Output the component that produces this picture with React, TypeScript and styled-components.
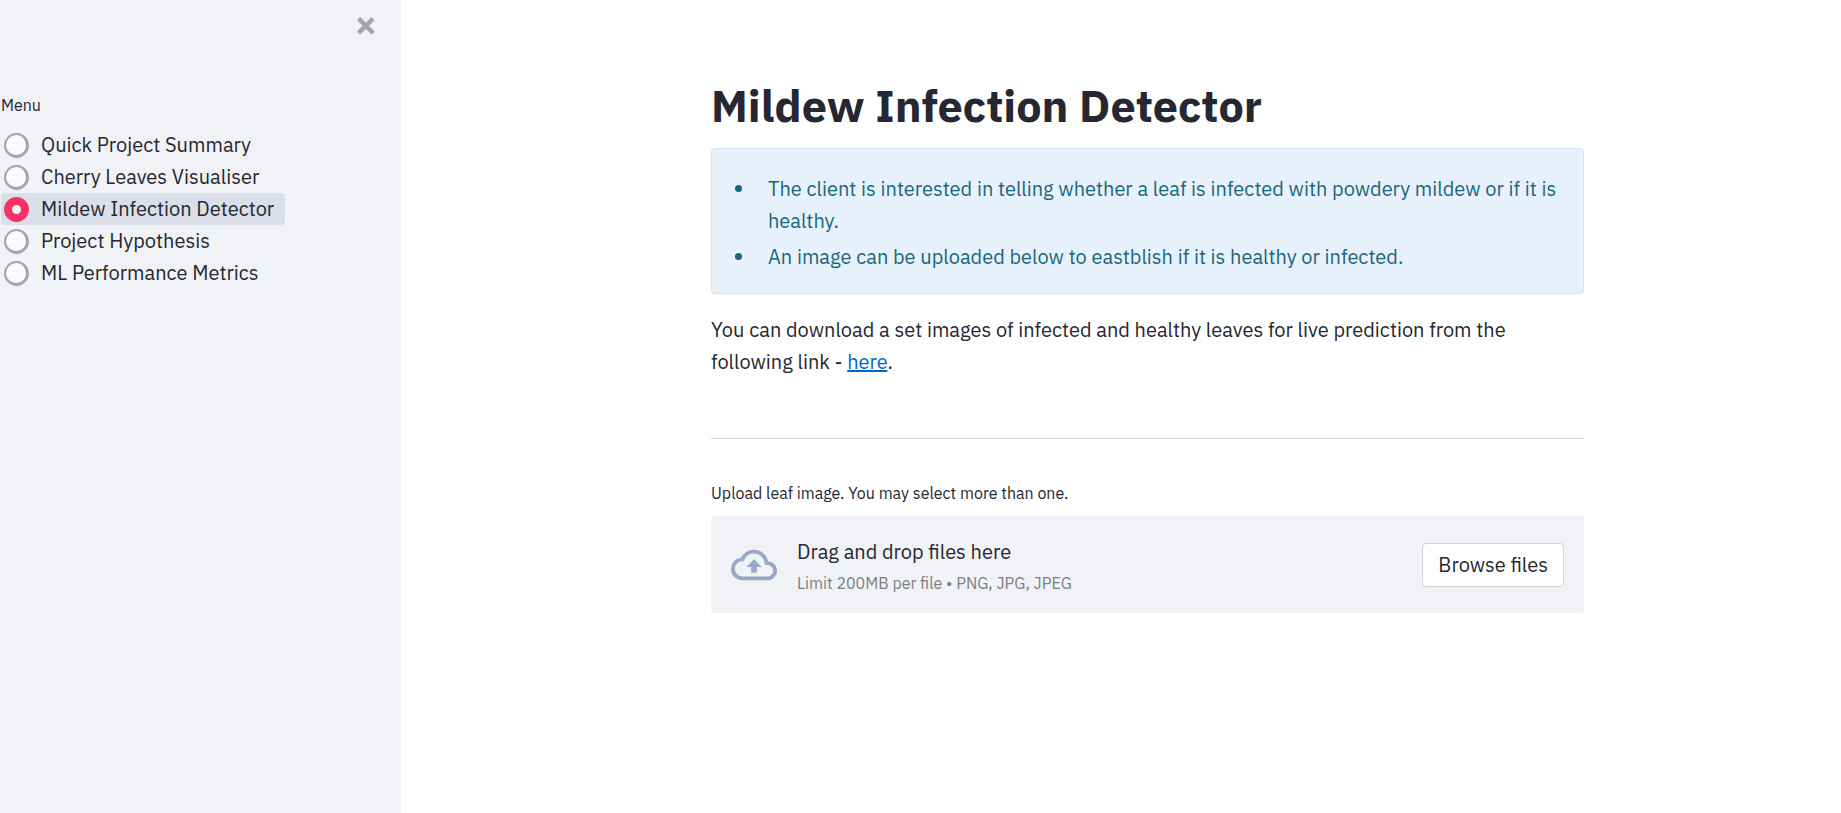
import React, { useRef, useState } from "react";
import styled, { createGlobalStyle } from "styled-components";
import { MdOutlineCloudUpload } from "react-icons/md";

const GlobalStyle = createGlobalStyle`
  *, *::before, *::after { box-sizing: border-box; }
  body {
    margin: 0;
    background: #ffffff;
    color: #262730;
    font-family: "IBM Plex Sans", "Noto Sans", sans-serif;
    font-size: 20px;
    font-weight: 400;
    line-height: 32px;
  }
`;

const Page = styled.div`
  display: flex;
  min-height: 100vh;
`;

const Sidebar = styled.aside`
  flex: 0 0 401px;
  background: #f0f2f6;
`;

const SidebarHeader = styled.div`
  display: flex;
  justify-content: flex-end;
  height: 93px;
  padding: 12px 21px;
`;

const CloseButton = styled.button`
  display: flex;
  align-items: center;
  justify-content: center;
  width: 28px;
  height: 28px;
  padding: 0;
  border: 0;
  background: none;
  color: #a3a5ab;
  cursor: pointer;
`;

const Menu = styled.fieldset`
  display: flex;
  flex-direction: column;
  align-items: flex-start;
  margin: 0;
  padding: 0 0 0 1px;
  border: 0;
`;

const MenuTitle = styled.legend`
  margin-bottom: 12px;
  padding: 0;
  font-size: 16px;
  line-height: 24px;
`;

const MenuItem = styled.label<{ $active: boolean }>`
  display: flex;
  align-items: center;
  gap: 12px;
  height: 32px;
  padding: 0 11px 0 3px;
  border-radius: 4px;
  background: ${(p) => (p.$active ? "#dadfe9" : "transparent")};
  cursor: pointer;
`;

const Radio = styled.input`
  appearance: none;
  width: 25px;
  height: 25px;
  margin: 0;
  border: solid #a3a5ab;
  border-width: 2px 3px 3px 2px;
  border-radius: 50%;
  background: #fafafc;

  &:checked {
    border: 8px solid #f63366;
    background: #f0f2f6;
  }
`;

const Main = styled.main`
  flex: 1;
  min-width: 0;
  padding: 80px 0 40px 53px;
`;

const Content = styled.div`
  max-width: 873px;
  margin: 0 auto;
`;

const Title = styled.h1`
  margin: 0 0 18px;
  font-size: 45px;
  font-weight: 700;
  line-height: 50px;
`;

const InfoBox = styled.div`
  padding: 20px 20px 16px;
  border: 1px solid #d0e4f8;
  border-radius: 4px;
  background: #e7f1fc;
  color: #1b6678;
`;

const InfoList = styled.ul`
  display: flow-root;
  margin: 0;
  padding: 0;
`;

const InfoItem = styled.li`
  margin: 4px 0 4px 24px;
  padding-left: 12px;
`;

const Paragraph = styled.p`
  margin: 20px 0 60px;
`;

const Link = styled.a`
  color: #0068c9;
`;

const Divider = styled.hr`
  height: 1px;
  margin: 0 0 42px;
  border: 0;
  background: #d4d5d9;
`;

const UploadLabel = styled.label`
  display: block;
  margin-bottom: 11px;
  font-size: 16px;
  line-height: 24px;
`;

const DropZone = styled.section`
  display: flex;
  align-items: center;
  padding: 18px 20px;
  border-radius: 4px;
  background: #f0f2f6;
`;

const CloudIcon = styled(MdOutlineCloudUpload)`
  flex: none;
  width: 46px;
  height: 46px;
  margin-right: 20px;
  color: #98a7c5;
`;

const DropText = styled.div`
  display: flex;
  flex: 1;
  flex-direction: column;
  gap: 3px;
  padding-top: 2px;
`;

const DropTitle = styled.span`
  line-height: 32px;
`;

const DropHint = styled.small`
  color: #7c7e86;
  font-size: 16px;
  line-height: 24px;
`;

const BrowseButton = styled.button`
  height: 44px;
  padding: 0 15px;
  border: 1px solid #d2d3d7;
  border-radius: 4px;
  background: #ffffff;
  color: inherit;
  font: inherit;
  cursor: pointer;
`;

const pages = [
  "Quick Project Summary",
  "Cherry Leaves Visualiser",
  "Mildew Infection Detector",
  "Project Hypothesis",
  "ML Performance Metrics",
];

export default function App() {
  const [page, setPage] = useState(pages[2]);
  const fileInput = useRef<HTMLInputElement>(null);

  return (
    <>
      <GlobalStyle />
      <Page>
        <Sidebar>
          <SidebarHeader>
            <CloseButton type="button" aria-label="Close sidebar">
              <svg width="18" height="18" viewBox="0 0 8 8" fill="currentColor" aria-hidden="true">
                <path d="M1.41 0l-1.41 1.41.72.72 1.78 1.81-1.78 1.78-.72.69 1.41 1.44.72-.72 1.81-1.81 1.78 1.81.69.72 1.44-1.44-.72-.69-1.81-1.78 1.81-1.81.72-.72-1.44-1.41-.69.72-1.78 1.78-1.81-1.78-.72-.72z" />
              </svg>
            </CloseButton>
          </SidebarHeader>
          <Menu>
            <MenuTitle>Menu</MenuTitle>
            {pages.map((name) => (
              <MenuItem key={name} $active={name === page}>
                <Radio
                  type="radio"
                  name="page"
                  checked={name === page}
                  onChange={() => setPage(name)}
                />
                <span>{name}</span>
              </MenuItem>
            ))}
          </Menu>
        </Sidebar>
        <Main>
          <Content>
            <Title>Mildew Infection Detector</Title>
            <InfoBox>
              <InfoList>
                <InfoItem>
                  The client is interested in telling whether a leaf is infected with powdery
                  mildew or if it is healthy.
                </InfoItem>
                <InfoItem>
                  An image can be uploaded below to eastblish if it is healthy or infected.
                </InfoItem>
              </InfoList>
            </InfoBox>
            <Paragraph>
              You can download a set images of infected and healthy leaves for live prediction
              from the following link - <Link href="#">here</Link>.
            </Paragraph>
            <Divider />
            <UploadLabel htmlFor="leaf-images">
              Upload leaf image. You may select more than one.
            </UploadLabel>
            <DropZone>
              <input
                ref={fileInput}
                id="leaf-images"
                type="file"
                accept=".png,.jpg,.jpeg"
                multiple
                hidden
              />
              <CloudIcon aria-hidden="true" />
              <DropText>
                <DropTitle>Drag and drop files here</DropTitle>
                <DropHint>Limit 200MB per file • PNG, JPG, JPEG</DropHint>
              </DropText>
              <BrowseButton type="button" onClick={() => fileInput.current?.click()}>
                Browse files
              </BrowseButton>
            </DropZone>
          </Content>
        </Main>
      </Page>
    </>
  );
}
